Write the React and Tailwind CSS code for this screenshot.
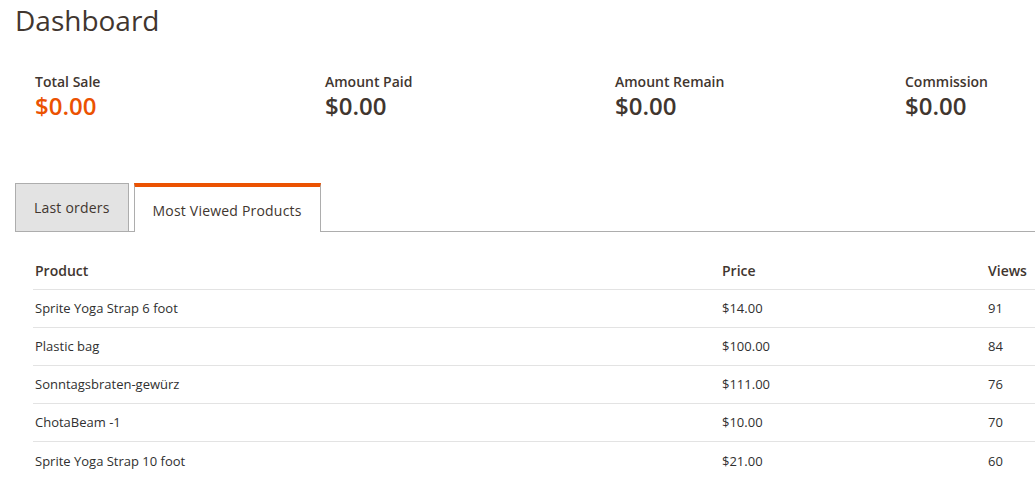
import React from "react";

const totals = [
  { label: "Total Sale", value: "$0.00", accent: true },
  { label: "Amount Paid", value: "$0.00" },
  { label: "Amount Remain", value: "$0.00" },
  { label: "Commission", value: "$0.00" },
];

const products = [
  { name: "Sprite Yoga Strap 6 foot", price: "$14.00", views: 91 },
  { name: "Plastic bag", price: "$100.00", views: 84 },
  { name: "Sonntagsbraten-gewürz", price: "$111.00", views: 76 },
  { name: "ChotaBeam -1", price: "$10.00", views: 70 },
  { name: "Sprite Yoga Strap 10 foot", price: "$21.00", views: 60 },
];

function App() {
  return (
    <div
      className="min-h-screen overflow-hidden bg-white pl-[15px] text-[#41362f]"
      style={{ fontFamily: '"Open Sans", "Liberation Sans", sans-serif' }}
    >
      <h1 className="pt-[4px] text-[28px] font-normal leading-[1.2] text-[#41362f]">Dashboard</h1>

      <div className="mt-[34px] flex pl-[20px]">
        {totals.map((t) => (
          <div key={t.label} className="w-[290px] shrink-0">
            <div className="text-[14px] font-semibold leading-[20px] text-[#41362f]">{t.label}</div>
            <div
              className={`text-[24px] font-semibold leading-[1.2] ${
                t.accent ? "text-[#eb5202]" : "text-[#41362f]"
              }`}
            >
              {t.value}
            </div>
          </div>
        ))}
      </div>

      <div className="mt-[63px] flex h-[49px] w-[1200px] border-b border-[#adadad]">
        <div className="flex h-[49px] items-center border border-[#adadad] bg-[#e3e3e3] px-[18px] text-[14px] tracking-[0.2px] text-[#41362f]">
          Last orders
        </div>
        <div className="relative z-10 ml-[5px] flex h-[49px] items-center border-x border-t-[4px] border-x-[#adadad] border-t-[#eb5202] bg-white px-[18px] pt-[1px] text-[14px] tracking-[0.2px] text-[#41362f]">
          Most Viewed Products
        </div>
      </div>

      <div className="ml-[18px] mt-[20px] w-[1200px]">
        <div className="grid h-[38px] grid-cols-[687px_266px_1fr] items-center border-b border-[#e3e3e3] text-[14px] font-semibold text-[#41362f]">
          <div className="pl-[2px]">Product</div>
          <div className="pl-[2px]">Price</div>
          <div className="pl-[2px]">Views</div>
        </div>
        {products.map((p, i) => (
          <div
            key={p.name}
            className={`grid h-[38px] grid-cols-[687px_266px_1fr] items-center text-[13px] text-[#303030] ${
              i < products.length - 1 ? "border-b border-[#e3e3e3]" : ""
            }`}
          >
            <div className="pl-[2px]">{p.name}</div>
            <div className="pl-[2px]">{p.price}</div>
            <div className="pl-[2px]">{p.views}</div>
          </div>
        ))}
      </div>
    </div>
  );
}

export default App;
